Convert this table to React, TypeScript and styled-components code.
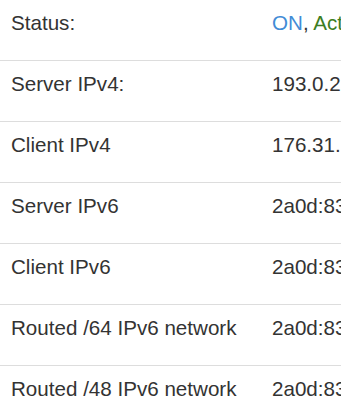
import type { ReactNode } from "react";
import styled, { createGlobalStyle } from "styled-components";

const GlobalStyle = createGlobalStyle`
  html, body {
    margin: 0;
    padding: 0;
    background: #ffffff;
    overflow: hidden;
  }
  body {
    font-family: "Liberation Sans", Arial, sans-serif;
    color: #333333;
  }
`;

const Wrapper = styled.div`
  width: 341px;
  height: 416px;
  overflow: hidden;
`;

const Table = styled.div`
  display: flex;
  flex-direction: column;
  width: 560px;
`;

const TableRow = styled.div`
  display: grid;
  grid-template-columns: 261px 1fr;
  border-bottom: 1px solid #dddddd;
`;

const Cell = styled.div`
  padding: 11px 11px 25px;
  font-size: 20.6px;
  line-height: 24px;
  white-space: nowrap;
`;

const Label = styled(Cell)``;

const Value = styled(Cell)``;

const On = styled.span`
  color: #428bd6;
`;

const Active = styled.span`
  color: #3d7d22;
`;

type Row = {
  label: string;
  value: ReactNode;
};

function App() {
  const rows: Row[] = [
    {
      label: "Status:",
      value: (
        <>
          <On>ON</On>, <Active>Active</Active>
        </>
      ),
    },
    { label: "Server IPv4:", value: "193.0.2.1" },
    { label: "Client IPv4", value: "176.31.118.42" },
    { label: "Server IPv6", value: "2a0d:8340:1::1" },
    { label: "Client IPv6", value: "2a0d:8340:1::2" },
    { label: "Routed /64 IPv6 network", value: "2a0d:8340:2::/64" },
    { label: "Routed /48 IPv6 network", value: "2a0d:8341::/48" },
  ];

  return (
    <>
      <GlobalStyle />
      <Wrapper>
        <Table>
          {rows.map((row) => (
            <TableRow key={row.label}>
              <Label>{row.label}</Label>
              <Value>{row.value}</Value>
            </TableRow>
          ))}
        </Table>
      </Wrapper>
    </>
  );
}

export default App;
